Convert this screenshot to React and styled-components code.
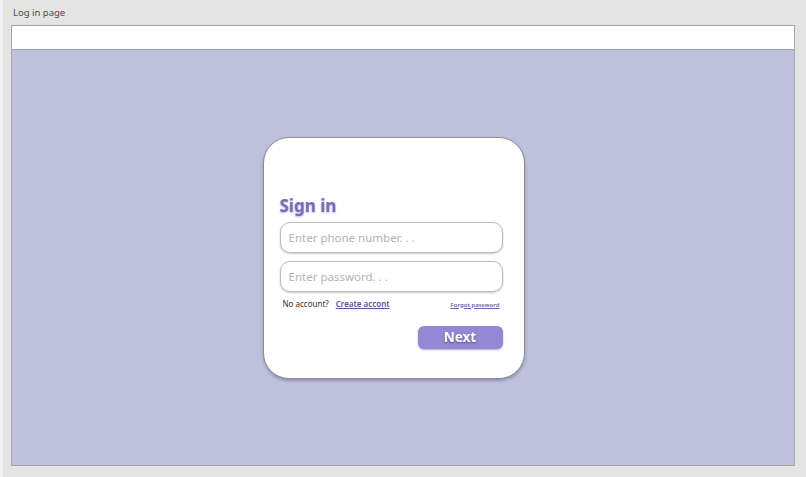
import React from 'react';
import styled, { createGlobalStyle } from 'styled-components';

const Global = createGlobalStyle`
    html, body {
        margin: 0;
        padding: 0;
    }
    body {
        font-family: "Noto Sans", "Open Sans", sans-serif;
        background-color: #e4e4e4;
    }
`;

const Page = styled.div`
    width: 806px;
    height: 477px;
    box-sizing: border-box;
    border-left: 3px solid #f1f1f1;
    background-color: #e4e4e4;
    padding: 0 11px 0 8px;
    display: flex;
    flex-direction: column;
`;

const PageTitle = styled.div`
    height: 25px;
    line-height: 26px;
    padding-left: 2px;
    font-size: 9.5px;
    color: #4a4a4a;
`;

const Frame = styled.div`
    height: 441px;
    box-sizing: border-box;
    border: 1px solid #a6a6ae;
    display: flex;
    flex-direction: column;
`;

const TopBar = styled.div`
    height: 23px;
    flex: none;
    background-color: #fff;
    border-bottom: 1px solid #9c9eb2;
`;

const Canvas = styled.div`
    flex: 1;
    background-color: #bec1dc;
    display: flex;
    align-items: center;
    justify-content: center;
    padding-right: 19px;
`;

const Card = styled.div`
    width: 262px;
    height: 242px;
    box-sizing: border-box;
    background-color: #fff;
    border: 1px solid #8c8c94;
    border-radius: 26px;
    box-shadow: 0 2px 3px rgba(60, 60, 90, 0.35);
    padding: 57px 21px 0 16px;
    display: flex;
    flex-direction: column;
`;

const Heading = styled.h1`
    margin: 0 0 5px;
    font-size: 17px;
    line-height: 22px;
    font-weight: 700;
    color: #7a6bb6;
    text-shadow: 0 1px 2px rgba(110, 90, 180, 0.45);
`;

const Field = styled.input`
    height: 31px;
    flex: none;
    box-sizing: border-box;
    border: 1px solid #bdbdc3;
    border-radius: 10px;
    box-shadow: 0 1px 2px rgba(0, 0, 0, 0.22);
    padding: 0 8px;
    margin-bottom: ${({ last }) => (last ? '0' : '8px')};
    font-family: inherit;
    font-size: 11.5px;
    color: #333;
    outline: none;
    &::placeholder {
        color: #b3b3b8;
    }
`;

const LinkRow = styled.div`
    display: flex;
    align-items: center;
    padding: 0 3px;
    height: 24px;
`;

const Muted = styled.span`
    font-size: 8px;
    color: #333;
    margin-right: 7px;
`;

const TextLink = styled.a`
    font-size: ${({ small }) => (small ? '6px' : '8px')};
    font-weight: 600;
    color: ${({ small }) => (small ? '#6c62a8' : '#5b5392')};
    text-decoration: underline;
    margin-left: ${({ small }) => (small ? 'auto' : '0')};
    margin-top: ${({ small }) => (small ? '2px' : '0')};
    cursor: pointer;
`;

const Actions = styled.div`
    display: flex;
    justify-content: flex-end;
    margin-top: 10px;
`;

const NextButton = styled.button`
    width: 85px;
    height: 23px;
    border: none;
    border-radius: 6px;
    background-color: #9488d4;
    box-shadow: 0 1px 2px rgba(60, 50, 120, 0.4);
    color: #fff;
    font-family: inherit;
    font-size: 13.5px;
    font-weight: 700;
    text-shadow: 0 1px 2px rgba(40, 30, 90, 0.6);
    cursor: pointer;
`;

export default function App() {
    return (
        <>
            <Global />
            <Page>
                <PageTitle>Log in page</PageTitle>
                <Frame>
                    <TopBar />
                    <Canvas>
                        <Card>
                            <Heading>Sign in</Heading>
                            <Field placeholder="Enter phone number. . ." />
                            <Field last type="password" placeholder="Enter password. . ." />
                            <LinkRow>
                                <Muted>No account?</Muted>
                                <TextLink>Create accont</TextLink>
                                <TextLink small>Forgot password</TextLink>
                            </LinkRow>
                            <Actions>
                                <NextButton>Next</NextButton>
                            </Actions>
                        </Card>
                    </Canvas>
                </Frame>
            </Page>
        </>
    );
}
